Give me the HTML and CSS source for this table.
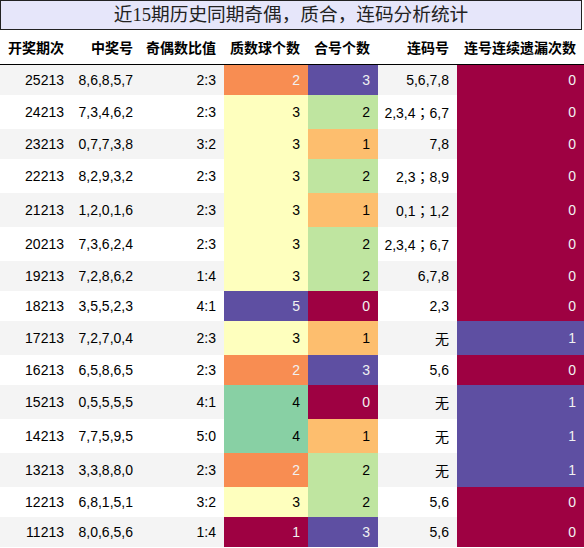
FILE: index.html
```html
<html lang="zh"><head><meta charset="utf8">
    <title>近15期历史同期奇偶，质合，连码分析统计</title>
    <link rel="stylesheet" href="styles.css">
    </head><body>
    <div class="title">近15期历史同期奇偶，质合，连码分析统计</div>
    <table class="stats">
        <colgroup>
            <col class="w-issue"><col class="w-nums"><col class="w-ratio"><col class="w-prime">
            <col class="w-comp"><col class="w-run"><col class="w-miss">
        </colgroup>
        <thead>
            <tr><th>开奖期次</th><th>中奖号</th><th>奇偶数比值</th><th>质数球个数</th><th>合号个数</th><th>连码号</th><th>连号连续遗漏次数</th></tr>
        </thead>
        <tbody>
            <tr><td>25213</td><td>8,6,8,5,7</td><td>2:3</td><td class="c-orange">2</td><td class="c-purple">3</td><td>5,6,7,8</td><td class="c-red">0</td></tr>
            <tr><td>24213</td><td>7,3,4,6,2</td><td>2:3</td><td class="c-yellow">3</td><td class="c-lime">2</td><td>2,3,4；6,7</td><td class="c-red">0</td></tr>
            <tr><td>23213</td><td>0,7,7,3,8</td><td>3:2</td><td class="c-yellow">3</td><td class="c-peach">1</td><td>7,8</td><td class="c-red">0</td></tr>
            <tr><td>22213</td><td>8,2,9,3,2</td><td>2:3</td><td class="c-yellow">3</td><td class="c-lime">2</td><td>2,3；8,9</td><td class="c-red">0</td></tr>
            <tr><td>21213</td><td>1,2,0,1,6</td><td>2:3</td><td class="c-yellow">3</td><td class="c-peach">1</td><td>0,1；1,2</td><td class="c-red">0</td></tr>
            <tr><td>20213</td><td>7,3,6,2,4</td><td>2:3</td><td class="c-yellow">3</td><td class="c-lime">2</td><td>2,3,4；6,7</td><td class="c-red">0</td></tr>
            <tr><td>19213</td><td>7,2,8,6,2</td><td>1:4</td><td class="c-yellow">3</td><td class="c-lime">2</td><td>6,7,8</td><td class="c-red">0</td></tr>
            <tr><td>18213</td><td>3,5,5,2,3</td><td>4:1</td><td class="c-purple">5</td><td class="c-red">0</td><td>2,3</td><td class="c-red">0</td></tr>
            <tr><td>17213</td><td>7,2,7,0,4</td><td>2:3</td><td class="c-yellow">3</td><td class="c-peach">1</td><td>无</td><td class="c-purple">1</td></tr>
            <tr><td>16213</td><td>6,5,8,6,5</td><td>2:3</td><td class="c-orange">2</td><td class="c-purple">3</td><td>5,6</td><td class="c-red">0</td></tr>
            <tr><td>15213</td><td>0,5,5,5,5</td><td>4:1</td><td class="c-green">4</td><td class="c-red">0</td><td>无</td><td class="c-purple">1</td></tr>
            <tr><td>14213</td><td>7,7,5,9,5</td><td>5:0</td><td class="c-green">4</td><td class="c-peach">1</td><td>无</td><td class="c-purple">1</td></tr>
            <tr><td>13213</td><td>3,3,8,8,0</td><td>2:3</td><td class="c-orange">2</td><td class="c-lime">2</td><td>无</td><td class="c-purple">1</td></tr>
            <tr><td>12213</td><td>6,8,1,5,1</td><td>3:2</td><td class="c-yellow">3</td><td class="c-lime">2</td><td>5,6</td><td class="c-red">0</td></tr>
            <tr><td>11213</td><td>8,0,6,5,6</td><td>1:4</td><td class="c-red">1</td><td class="c-purple">3</td><td>5,6</td><td class="c-red">0</td></tr>
        </tbody>
    </table>
    </body></html>
```

FILE: styles.css
```css
body {
    margin: 0;
    background: #fff;
    color: #000;
    font-family: "Liberation Sans", Arial, "Noto Sans CJK JP", sans-serif;
    font-size: 14px;
    width: 584px;
}

.title {
    box-sizing: border-box;
    width: 582px;
    height: 30px;
    border: 1px solid #222;
    background: #e6e6fa;
    color: #222;
    font-family: "Liberation Serif", "Noto Sans CJK JP", serif;
    font-size: 18.67px;
    line-height: 28px;
    text-align: center;
}

/* tables don't inherit font size without a doctype */
.stats {
    width: 584px;
    table-layout: fixed;
    border-collapse: collapse;
    border-spacing: 0;
    font-family: "Liberation Sans", Arial, "Noto Sans CJK JP", sans-serif;
    font-size: 14px;
    color: #000;
}

.w-issue { width: 72px; }
.w-nums { width: 69px; }
.w-ratio { width: 83px; }
.w-prime { width: 84px; }
.w-comp { width: 70px; }
.w-run { width: 79px; }
.w-miss { width: 127px; }

.stats th, .stats td {
    padding: 7px 8px 7px 0;
    text-align: right;
    white-space: nowrap;
}

.stats th {
    font-weight: bold;
    border-bottom: 1px solid #000;
}

.stats tbody tr:nth-child(odd) {
    background: #f4f4f4;
}

/* spectral gradient cells */
.c-red { background: #9e0142; color: #f1f1f1; }
.c-orange { background: #f88d52; color: #f1f1f1; }
.c-peach { background: #fdbe6e; color: #000; }
.c-yellow { background: #feffbe; color: #000; }
.c-lime { background: #bfe5a0; color: #000; }
.c-green { background: #88d0a4; color: #000; }
.c-purple { background: #5e4fa2; color: #f1f1f1; }
```
